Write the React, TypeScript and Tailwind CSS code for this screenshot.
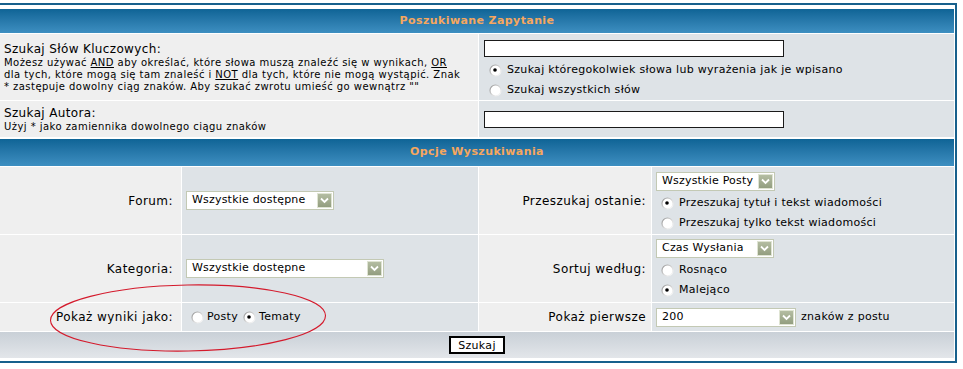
import type { ReactNode } from "react";

function Radio({ checked }: { checked?: boolean }) {
  return (
    <svg width="13" height="13" viewBox="0 0 13 13" className="ml-[5px] mr-[3px] shrink-0">
      <defs>
        <linearGradient id="radio-edge" x1="0" y1="0" x2="1" y2="1">
          <stop offset="0" stopColor="#8f8f8f" />
          <stop offset="0.55" stopColor="#d8d8d8" />
          <stop offset="1" stopColor="#ffffff" />
        </linearGradient>
      </defs>
      <circle cx="6.5" cy="6.5" r="5.5" fill="#fff" stroke="url(#radio-edge)" strokeWidth="1.2" />
      {checked && <circle cx="6" cy="6" r="1.8" fill="#000" />}
    </svg>
  );
}

function Select({ value, className }: { value: string; className: string }) {
  return (
    <div className={`flex h-[19px] items-center justify-between border border-[#c3c9b4] bg-white pl-[5px] pr-px text-[11px] tracking-[0.2px] ${className}`}>
      <span className="whitespace-nowrap">{value}</span>
      <span className="flex h-[15px] w-[15px] items-center justify-center border border-[#dfe4d3] bg-gradient-to-b from-[#b4bda2] to-[#939e80]">
        <svg width="9" height="7" viewBox="0 0 9 7">
          <path d="M1 1.5 L4.5 5 L8 1.5" fill="none" stroke="#fff" strokeWidth="1.8" />
        </svg>
      </span>
    </div>
  );
}

function RadioRow({ checked, children }: { checked?: boolean; children: ReactNode }) {
  return (
    <div className="flex h-[20px] items-center text-[11px] tracking-[0.3px]">
      <Radio checked={checked} />
      <span className="ml-[2px] whitespace-nowrap">{children}</span>
    </div>
  );
}

function Header({ children, className = "" }: { children: ReactNode; className?: string }) {
  return (
    <div className={`flex items-center justify-center bg-gradient-to-b from-[#0e6496] to-[#3d8fc1] text-[11px] font-bold tracking-[0.4px] text-[#f6a75e] ${className}`}>
      {children}
    </div>
  );
}

export default function App() {
  return (
    <div className="relative h-[369px] overflow-hidden bg-white pt-[3px] font-['DejaVu_Sans',Verdana,sans-serif] text-black">
      <div className="-ml-[3px] flex w-[960px] flex-col gap-px border-2 border-[#17608c] bg-white px-px pb-[3px] pt-1">
        <Header className="h-[24px]">Poszukiwane Zapytanie</Header>

        <div className="grid h-[66px] grid-cols-[478px_1fr] gap-px">
          <div className="flex flex-col justify-center bg-[#efefef] px-1">
            <span className="text-[12px] leading-[15px] tracking-[0.35px]">Szukaj Słów Kluczowych:</span>
            <span className="whitespace-nowrap text-[10px] leading-[12px] tracking-[0.45px]">
              Możesz używać <u>AND</u> aby określać, które słowa muszą znaleźć się w wynikach, <u>OR</u>
              <br />
              dla tych, które mogą się tam znaleść i <u>NOT</u> dla tych, które nie mogą wystąpić. Znak
              <br />
              * zastępuje dowolny ciąg znaków. Aby szukać zwrotu umieść go wewnątrz ""
            </span>
          </div>
          <div className="flex flex-col bg-[#dee3e7] pl-[5px] pt-[6px]">
            <div className="h-[17px] w-[300px] border border-[#1a1a1a] bg-white" />
            <div className="mt-[3px]">
              <RadioRow checked>Szukaj któregokolwiek słowa lub wyrażenia jak je wpisano</RadioRow>
              <RadioRow>Szukaj wszystkich słów</RadioRow>
            </div>
          </div>
        </div>

        <div className="grid h-[36px] grid-cols-[478px_1fr] gap-px">
          <div className="flex flex-col justify-center bg-[#efefef] px-1">
            <span className="text-[12px] leading-[15px] tracking-[0.35px]">Szukaj Autora:</span>
            <span className="text-[10px] leading-[12px] tracking-[0.45px]">Użyj * jako zamiennika dowolnego ciągu znaków</span>
          </div>
          <div className="flex items-center bg-[#dee3e7] pl-[5px]">
            <div className="h-[17px] w-[300px] border border-[#1a1a1a] bg-white" />
          </div>
        </div>

        <Header className="mt-px h-[27px]">Opcje Wyszukiwania</Header>

        <div className="grid grid-cols-[181px_296px_172px_1fr] grid-rows-[67px_67px_28px] gap-px text-[12px] tracking-[0.45px]">
          <div className="flex items-center justify-end bg-[#efefef] pr-2">Forum:</div>
          <div className="flex items-center bg-[#dee3e7] pl-1">
            <Select value="Wszystkie dostępne" className="w-[148px]" />
          </div>
          <div className="flex items-center justify-end bg-[#efefef] pr-[5px]">Przeszukaj ostanie:</div>
          <div className="flex flex-col bg-[#dee3e7] pl-1 pt-[5px]">
            <Select value="Wszystkie Posty" className="w-[119px]" />
            <div className="mt-[2px]">
              <RadioRow checked>Przeszukaj tytuł i tekst wiadomości</RadioRow>
              <RadioRow>Przeszukaj tylko tekst wiadomości</RadioRow>
            </div>
          </div>

          <div className="flex items-center justify-end bg-[#efefef] pr-2">Kategoria:</div>
          <div className="flex items-center bg-[#dee3e7] pl-1">
            <Select value="Wszystkie dostępne" className="w-[198px]" />
          </div>
          <div className="flex items-center justify-end bg-[#efefef] pr-[5px]">Sortuj według:</div>
          <div className="flex flex-col bg-[#dee3e7] pl-1 pt-[4px]">
            <Select value="Czas Wysłania" className="w-[118px]" />
            <div className="mt-[2px]">
              <RadioRow>Rosnąco</RadioRow>
              <RadioRow checked>Malejąco</RadioRow>
            </div>
          </div>

          <div className="flex items-center justify-end bg-[#efefef] pr-2">Pokaż wyniki jako:</div>
          <div className="flex items-center bg-[#dee3e7] pl-1 text-[11px] tracking-[0.3px]">
            <Radio />
            <span>Posty</span>
            <Radio checked />
            <span>Tematy</span>
          </div>
          <div className="flex items-center justify-end bg-[#efefef] pr-[5px]">Pokaż pierwsze</div>
          <div className="flex items-center bg-[#dee3e7] pl-1 text-[11px] tracking-[0.3px]">
            <Select value="200" className="w-[140px]" />
            <span className="ml-[5px]">znaków z postu</span>
          </div>
        </div>

        <div className="flex h-[26px] items-center justify-center bg-gradient-to-b from-[#c9d0d7] to-[#e3e6ea]">
          <button className="h-[18px] w-[56px] border-2 border-black bg-white text-[11px] leading-none tracking-[0.3px]">Szukaj</button>
        </div>
      </div>

      <svg className="pointer-events-none absolute left-[48px] top-[282px]" width="282" height="72" viewBox="0 0 282 72">
        <ellipse cx="140" cy="36" rx="137.5" ry="33" fill="none" stroke="#d41a2c" strokeWidth="1.1" transform="rotate(-1 140 36)" />
      </svg>
    </div>
  );
}
